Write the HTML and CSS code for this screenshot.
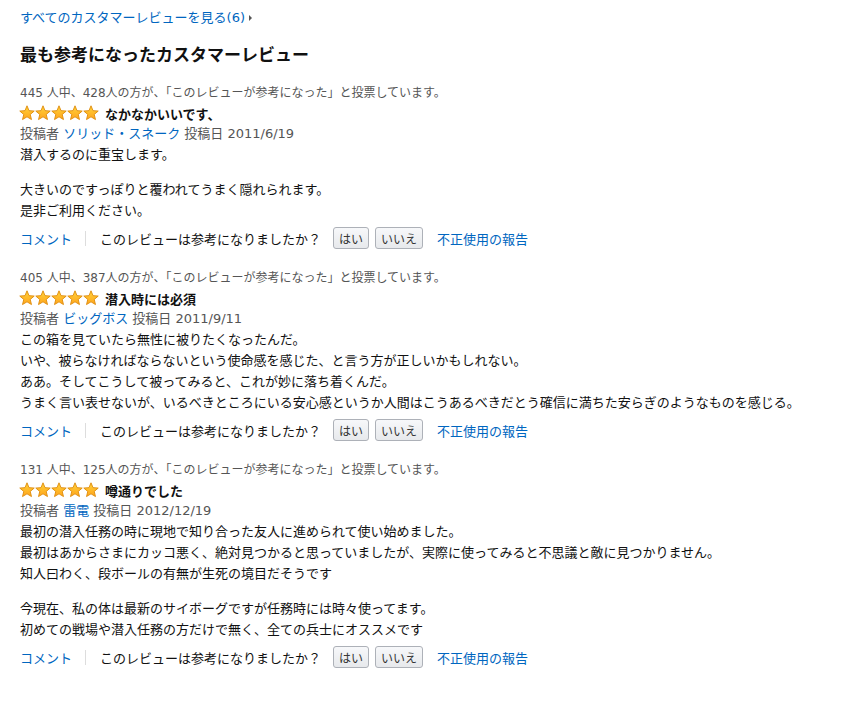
FILE: index.html
```html
<!DOCTYPE html>
<html lang="ja">
<head>
  <meta charset="UTF-8">
  <title>カスタマーレビュー</title>
  <link rel="stylesheet" href="styles.css">
</head>
<body>

  <svg class="defs" width="0" height="0">
    <defs>
      <linearGradient id="starFill" x1="0" y1="0" x2="0" y2="1">
        <stop offset="0" stop-color="#ffd33a"/>
        <stop offset="1" stop-color="#ffa41c"/>
      </linearGradient>
      <symbol id="star" viewBox="0 0 16 16">
        <polygon points="8,0.8 10,5.65 15.23,6.05 11.23,9.45 12.47,14.55 8,11.8 3.53,14.55 4.77,9.45 0.77,6.05 6,5.65"
          fill="url(#starFill)" stroke="#de8a0a" stroke-width="0.9" stroke-linejoin="round"/>
      </symbol>
    </defs>
  </svg>

  <div class="page">
    <a class="all-link" href="#">すべてのカスタマーレビューを見る(6)<span class="caret"></span></a>

    <h2 class="heading">最も参考になったカスタマーレビュー</h2>

    <div class="review">
      <div class="votes">445 人中、428人の方が、「このレビューが参考になった」と投票しています。</div>
      <div class="title-row">
        <svg class="stars" width="80" height="16" viewBox="0 0 80 16">
          <use href="#star" x="0" width="16" height="16"/>
          <use href="#star" x="16" width="16" height="16"/>
          <use href="#star" x="32" width="16" height="16"/>
          <use href="#star" x="48" width="16" height="16"/>
          <use href="#star" x="64" width="16" height="16"/>
        </svg>
        <span class="title">なかなかいいです、</span>
      </div>
      <div class="byline">投稿者 <a href="#">ソリッド・スネーク</a> 投稿日 2011/6/19</div>
      <div class="body">
        <p>潜入するのに重宝します。</p>
        <p>大きいのですっぽりと覆われてうまく隠れられます。<br>是非ご利用ください。</p>
      </div>
      <div class="actions">
        <a href="#">コメント</a>
        <span class="sep"></span>
        <span class="ask">このレビューは参考になりましたか？</span>
        <button class="vote-btn">はい</button>
        <button class="vote-btn">いいえ</button>
        <a class="report" href="#">不正使用の報告</a>
      </div>
    </div>

    <div class="review">
      <div class="votes">405 人中、387人の方が、「このレビューが参考になった」と投票しています。</div>
      <div class="title-row">
        <svg class="stars" width="80" height="16" viewBox="0 0 80 16">
          <use href="#star" x="0" width="16" height="16"/>
          <use href="#star" x="16" width="16" height="16"/>
          <use href="#star" x="32" width="16" height="16"/>
          <use href="#star" x="48" width="16" height="16"/>
          <use href="#star" x="64" width="16" height="16"/>
        </svg>
        <span class="title">潜入時には必須</span>
      </div>
      <div class="byline">投稿者 <a href="#">ビッグボス</a> 投稿日 2011/9/11</div>
      <div class="body">
        <p>この箱を見ていたら無性に被りたくなったんだ。<br>いや、被らなければならないという使命感を感じた、と言う方が正しいかもしれない。<br>ああ。そしてこうして被ってみると、これが妙に落ち着くんだ。<br>うまく言い表せないが、いるべきところにいる安心感というか人間はこうあるべきだとう確信に満ちた安らぎのようなものを感じる。</p>
      </div>
      <div class="actions">
        <a href="#">コメント</a>
        <span class="sep"></span>
        <span class="ask">このレビューは参考になりましたか？</span>
        <button class="vote-btn">はい</button>
        <button class="vote-btn">いいえ</button>
        <a class="report" href="#">不正使用の報告</a>
      </div>
    </div>

    <div class="review">
      <div class="votes">131 人中、125人の方が、「このレビューが参考になった」と投票しています。</div>
      <div class="title-row">
        <svg class="stars" width="80" height="16" viewBox="0 0 80 16">
          <use href="#star" x="0" width="16" height="16"/>
          <use href="#star" x="16" width="16" height="16"/>
          <use href="#star" x="32" width="16" height="16"/>
          <use href="#star" x="48" width="16" height="16"/>
          <use href="#star" x="64" width="16" height="16"/>
        </svg>
        <span class="title">噂通りでした</span>
      </div>
      <div class="byline">投稿者 <a href="#">雷電</a> 投稿日 2012/12/19</div>
      <div class="body">
        <p>最初の潜入任務の時に現地で知り合った友人に進められて使い始めました。<br>最初はあからさまにカッコ悪く、絶対見つかると思っていましたが、実際に使ってみると不思議と敵に見つかりません。<br>知人曰わく、段ボールの有無が生死の境目だそうです</p>
        <p>今現在、私の体は最新のサイボーグですが任務時には時々使ってます。<br>初めての戦場や潜入任務の方だけで無く、全ての兵士にオススメです</p>
      </div>
      <div class="actions">
        <a href="#">コメント</a>
        <span class="sep"></span>
        <span class="ask">このレビューは参考になりましたか？</span>
        <button class="vote-btn">はい</button>
        <button class="vote-btn">いいえ</button>
        <a class="report" href="#">不正使用の報告</a>
      </div>
    </div>
  </div>

</body>
</html>
```

FILE: styles.css
```css
body {
  margin: 0;
  background: #fff;
  font-family: "DejaVu Sans", "Noto Sans CJK JP", sans-serif;
  font-size: 13px;
  color: #111;
}

a {
  color: #0066c0;
  text-decoration: none;
}

.defs {
  position: absolute;
  width: 0;
  height: 0;
}

.page {
  padding: 8px 20px 0 20px;
}

.all-link {
  display: inline-block;
  line-height: 20px;
}

.caret {
  display: inline-block;
  width: 0;
  height: 0;
  margin-left: 4px;
  vertical-align: 1px;
  border-top: 3px solid transparent;
  border-bottom: 3px solid transparent;
  border-left: 3px solid #555;
}

.heading {
  margin: 15px 0 17px 0;
  font-size: 17px;
  line-height: 24px;
  font-weight: bold;
}

.review {
  margin-bottom: 20px;
}

.votes {
  font-size: 12px;
  line-height: 18px;
  color: #555;
}

.title-row {
  display: flex;
  align-items: center;
  height: 22px;
  gap: 6px;
}

.stars {
  display: block;
  margin-left: -1px;
}

.title {
  font-weight: bold;
}

.byline {
  line-height: 20px;
  color: #555;
}

.body p {
  margin: 0;
  line-height: 21px;
}

.body p + p {
  margin-top: 14px;
}

.actions {
  display: flex;
  align-items: center;
  height: 22px;
  margin-top: 6px;
}

.sep {
  width: 1px;
  height: 15px;
  background: #ddd;
  margin: 0 14px 0 13px;
}

.ask {
  margin-right: 12px;
}

.vote-btn {
  height: 22px;
  padding: 0 5px;
  margin-right: 6px;
  font-family: inherit;
  font-size: 12px;
  color: #333;
  background: linear-gradient(#f7f8fa, #e7e9ec);
  border: 1px solid #adb1b8;
  border-radius: 3px;
}

.report {
  margin-left: 8px;
}
```
